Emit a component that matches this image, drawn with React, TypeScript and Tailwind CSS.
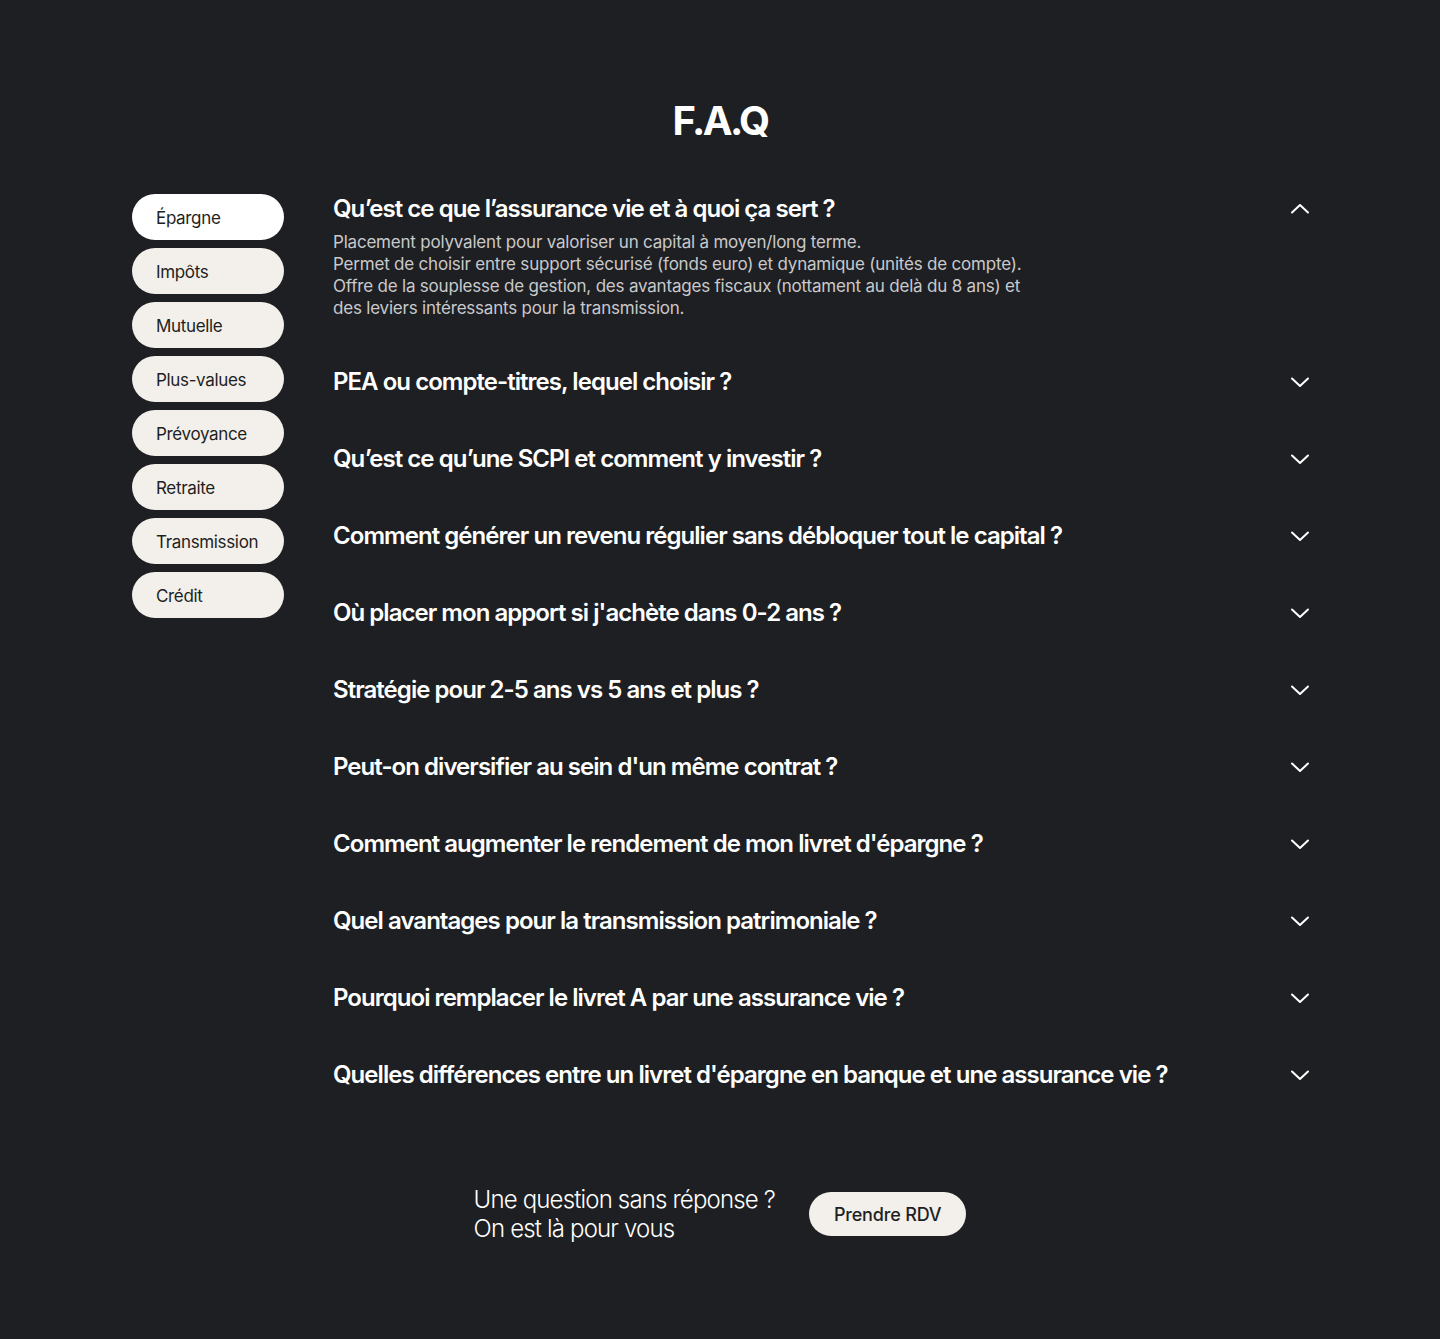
import { useState } from 'react';

const categories = ['Épargne', 'Impôts', 'Mutuelle', 'Plus-values', 'Prévoyance', 'Retraite', 'Transmission', 'Crédit'];

const faqs = [
  {
    q: 'Qu’est ce que l’assurance vie et à quoi ça sert ?',
    a: [
      'Placement polyvalent pour valoriser un capital à moyen/long terme.',
      'Permet de choisir entre support sécurisé (fonds euro) et dynamique (unités de compte).',
      'Offre de la souplesse de gestion, des avantages fiscaux (nottament au delà du 8 ans) et',
      'des leviers intéressants pour la transmission.',
    ],
  },
  { q: 'PEA ou compte-titres, lequel choisir ?', a: [] },
  { q: 'Qu’est ce qu’une SCPI et comment y investir ?', a: [] },
  { q: 'Comment générer un revenu régulier sans débloquer tout le capital ?', a: [] },
  { q: "Où placer mon apport si j'achète dans 0-2 ans ?", a: [] },
  { q: 'Stratégie pour 2-5 ans vs 5 ans et plus ?', a: [] },
  { q: "Peut-on diversifier au sein d'un même contrat ?", a: [] },
  { q: "Comment augmenter le rendement de mon livret d'épargne ?", a: [] },
  { q: 'Quel avantages pour la transmission patrimoniale ?', a: [] },
  { q: 'Pourquoi remplacer le livret A par une assurance vie ?', a: [] },
  { q: "Quelles différences entre un livret d'épargne en banque et une assurance vie ?", a: [] },
];

function Chevron({ up }: { up: boolean }) {
  return (
    <svg width="20" height="12" viewBox="0 0 20 12" fill="none" className={up ? 'rotate-180' : ''}>
      <path d="M2 2.5l8 7.5 8-7.5" stroke="#ffffff" strokeWidth="2" strokeLinecap="round" strokeLinejoin="round" />
    </svg>
  );
}

export default function App() {
  const [active, setActive] = useState('Épargne');
  const [open, setOpen] = useState(0);

  return (
    <div className="min-h-screen bg-[#1e1f23] text-white font-['Inter',sans-serif] pt-[97px] pb-[96px]">
      <h1 className="text-center text-[40px] leading-[48px] font-bold tracking-[-0.065em]">F.A.Q</h1>

      <div className="mx-auto mt-[49px] flex w-[1176px] gap-[49px]">
        {/* Categories */}
        <div className="flex w-[152px] shrink-0 flex-col gap-2">
          {categories.map(c => (
            <button
              key={c}
              onClick={() => setActive(c)}
              className={`h-[46px] rounded-full px-6 pt-[4px] text-left text-[17px] tracking-[-0.02em] text-[#1e1f23] ${
                active === c ? 'bg-white' : 'bg-[#f3efea]'
              }`}
            >
              {c}
            </button>
          ))}
        </div>

        {/* Questions */}
        <div className="flex flex-1 flex-col gap-12">
          {faqs.map((f, i) => (
            <div key={f.q}>
              <button
                onClick={() => setOpen(open === i ? -1 : i)}
                className="flex w-full items-center justify-between text-left"
              >
                <span className="text-[24px] leading-[29px] font-semibold tracking-[-0.04em]">{f.q}</span>
                <span className="-mr-[2px]">
                  <Chevron up={open === i} />
                </span>
              </button>
              {open === i && f.a.length > 0 && (
                <div className="mt-[8px] text-[17px] leading-[22px] tracking-[-0.012em] text-[#c9c9cb]">
                  {f.a.map(line => (
                    <p key={line}>{line}</p>
                  ))}
                </div>
              )}
            </div>
          ))}
        </div>
      </div>

      {/* Contact */}
      <div className="mt-[96px] flex items-center justify-center gap-[34px]">
        <p className="text-[24px] leading-[29px] font-light tracking-[-0.035em]">
          Une question sans réponse ?<br />
          On est là pour vous
        </p>
        <button className="h-[44px] rounded-full bg-[#f3efea] px-[25px] text-[18px] font-medium tracking-[-0.01em] text-[#1e1f23]">
          Prendre RDV
        </button>
      </div>
    </div>
  );
}
